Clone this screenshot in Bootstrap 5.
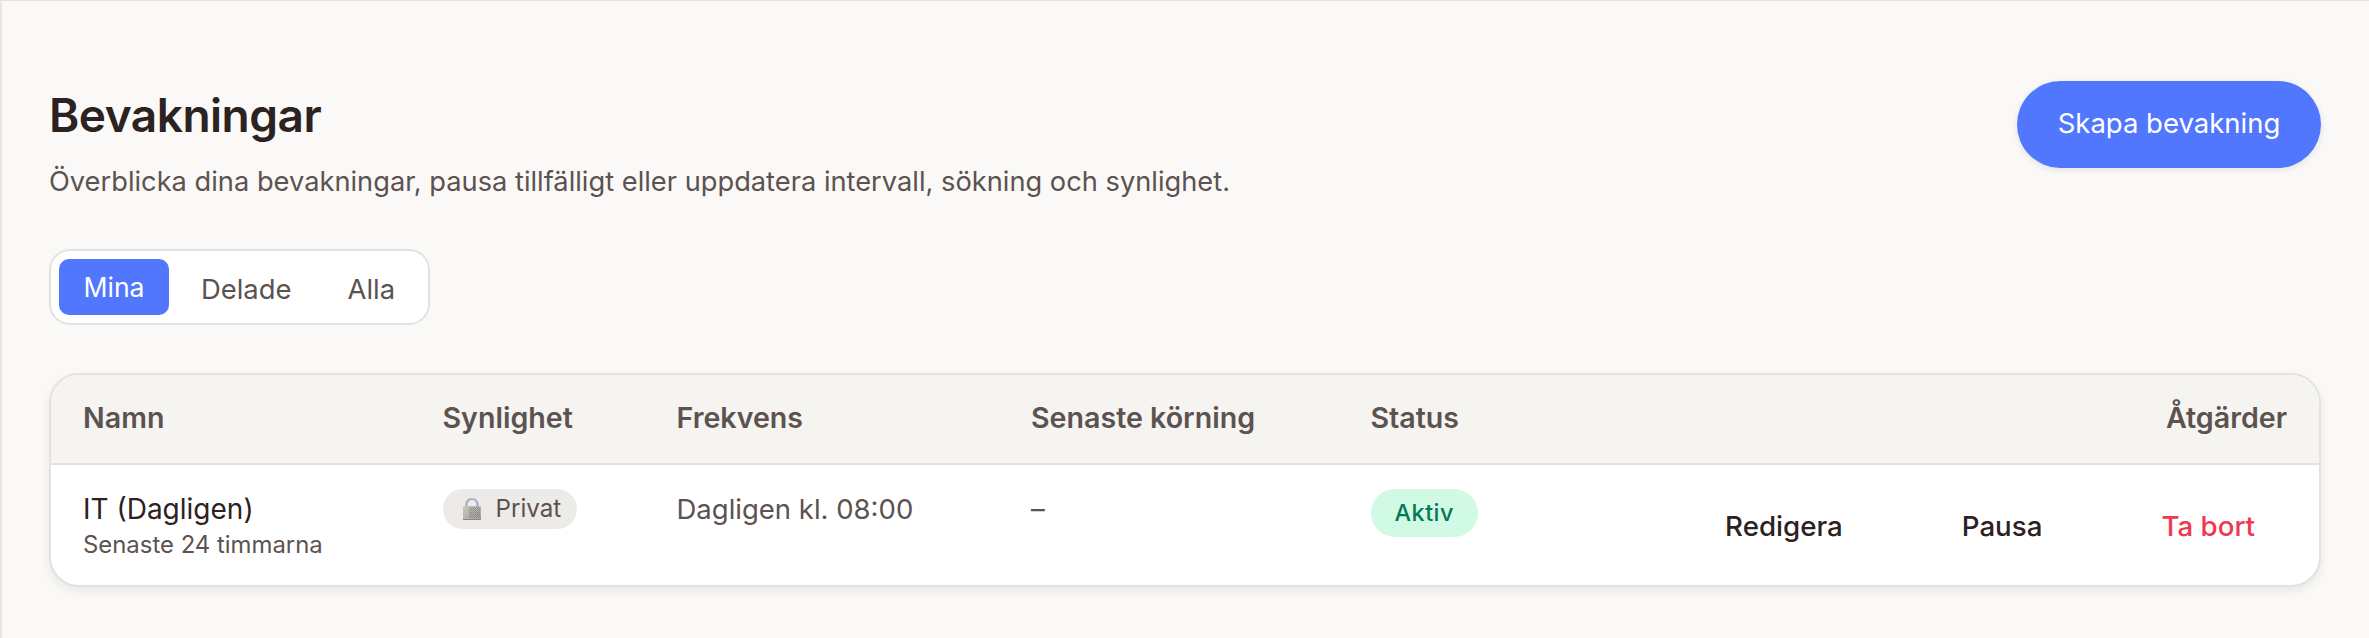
<!doctype html>
<html lang="sv"><head><meta charset="utf-8"><title>Bevakningar</title>
<link href="https://cdn.jsdelivr.net/npm/bootstrap@5.3.0/dist/css/bootstrap.min.css" rel="stylesheet">
<style>
html,body{height:100%}
body{background:#faf9f7;font-family:Inter,"Liberation Sans",sans-serif;color:#2b2221;overflow:hidden}
.shell{height:638px;border-top:1px solid #e4e2de;border-left:2px solid #e8e6e2;padding:77.5px 48px 0 47px}
.page-title{font-size:46px;font-weight:600;line-height:72px;margin:0;letter-spacing:-.5px;color:#2b2221}
.page-sub{font-size:27.25px;line-height:40px;color:#5c5250;margin:11px 0 0}
.cta{background:#5177ff;color:#fff;border:0;border-radius:45px;width:304px;height:87px;font-size:27.5px;font-weight:400;box-shadow:0 2px 6px rgba(43,34,33,.1);margin-top:2px}
.cta:hover{background:#5177ff;color:#fff}
.seg{background:#fff;border:2px solid #e4e2de;border-radius:21px;padding:8px;margin-top:47px;height:76px}
.seg-item{font-size:27.4px;line-height:40px;color:#5c5250;padding:10px 28px;border:0;background:transparent;border-radius:10px;height:56px}
.seg-item.on{background:#5177ff;color:#fff;padding:8px 24px;font-size:26.6px;width:110px;margin-right:4px}
.seg-item:last-child{padding-right:25px}
.tbl-wrap{margin-top:48px;background:#fff;border:2px solid #e4e2de;border-radius:30px;overflow:hidden;box-shadow:0 4px 8px rgba(43,34,33,.08)}
.tbl{width:100%;table-layout:fixed;margin:0;border-collapse:separate;border-spacing:0}
.tbl th{background:#f5f4f1;color:#5c5250;font-size:28.6px;font-weight:600;height:90.500px;padding:0 32px;border-bottom:2px solid #e4e2de;vertical-align:middle}
.tbl td{font-size:27.5px;padding:24px 32px 0;height:120px;vertical-align:top;color:#5c5250;line-height:40px;border:0}
.c1{width:359.500px}.c2{width:234px}.c3{width:354.500px}.c4{width:339.500px}
.item-name{color:#2b2221;line-height:40px;font-size:28px}
.item-meta{font-size:23.9px;line-height:32px;color:#5c5250}
.pill-priv{display:inline-flex;align-items:center;gap:15px;background:#edebe7;color:#5c5250;border-radius:20px;height:40px;padding:0 16px 0 20px;font-size:24.2px;letter-spacing:0}
.pill-ok{display:inline-flex;align-items:center;background:#d1fae5;color:#047857;border-radius:24px;height:48px;padding:0 24px;font-size:23.4px;font-weight:500;letter-spacing:.5px}
.acts{display:flex;justify-content:flex-end;gap:55px;padding-top:17px}
.act{font-size:27.7px;font-weight:450;background:none;border:0;padding:0 32px;line-height:40px;color:#2b2221}
.act.del{color:#f0384f}
</style></head><body>
<div class="shell">
  <div class="d-flex justify-content-between align-items-start">
    <div>
      <h1 class="page-title">Bevakningar</h1>
      <p class="page-sub">Överblicka dina bevakningar, pausa tillfälligt eller uppdatera intervall, sökning och synlighet.</p>
    </div>
    <button class="cta btn">Skapa bevakning</button>
  </div>
  <div class="d-inline-flex seg">
    <button class="seg-item on">Mina</button>
    <button class="seg-item">Delade</button>
    <button class="seg-item">Alla</button>
  </div>
  <div class="tbl-wrap">
    <table class="tbl">
      <colgroup><col class="c1"><col class="c2"><col class="c3"><col class="c4"><col></colgroup>
      <thead><tr><th>Namn</th><th>Synlighet</th><th>Frekvens</th><th>Senaste körning</th><th><div class="d-flex justify-content-between"><span>Status</span><span>Åtgärder</span></div></th></tr></thead>
      <tbody><tr>
        <td><div class="item-name">IT (Dagligen)</div><div class="item-meta">Senaste 24 timmarna</div></td>
        <td><span class="pill-priv"><svg width="18" height="22" viewBox="0 0 18 22" aria-hidden="true"><defs><linearGradient id="sh" x1="0" x2="1"><stop offset="0" stop-color="#a9a7a8"/><stop offset=".5" stop-color="#b9b8c4"/><stop offset="1" stop-color="#9fa9d6"/></linearGradient><linearGradient id="bd" x1="0" x2="1" y1="0" y2="1"><stop offset="0" stop-color="#c9c5bf"/><stop offset="1" stop-color="#a5a09a"/></linearGradient><pattern id="dth" width="2" height="2" patternUnits="userSpaceOnUse"><rect width="1" height="1" fill="#6f6a66"/><rect x="1" y="1" width="1" height="1" fill="#8a8580"/></pattern></defs><path d="M3.500 9V6.200a5.500 5.200 0 0 1 11 0V9" fill="none" stroke="url(#sh)" stroke-width="2.200"/><rect x="0" y="8" width="18" height="14" rx="1" fill="url(#bd)"/><rect x="6" y="9" width="11" height="11" fill="url(#dth)" opacity=".65"/><rect x="0" y="21" width="18" height="1" fill="#8d8882"/></svg>Privat</span></td>
        <td>Dagligen kl. 08:00</td>
        <td>–</td>
        <td><div class="d-flex justify-content-between"><span class="pill-ok">Aktiv</span><div class="acts"><button class="act">Redigera</button><button class="act">Pausa</button><button class="act del">Ta bort</button></div></div></td>
      </tr></tbody>
    </table>
  </div>
</div>
<script src="https://cdn.jsdelivr.net/npm/bootstrap@5.3.0/dist/js/bootstrap.bundle.min.js"></script>
</body></html>
